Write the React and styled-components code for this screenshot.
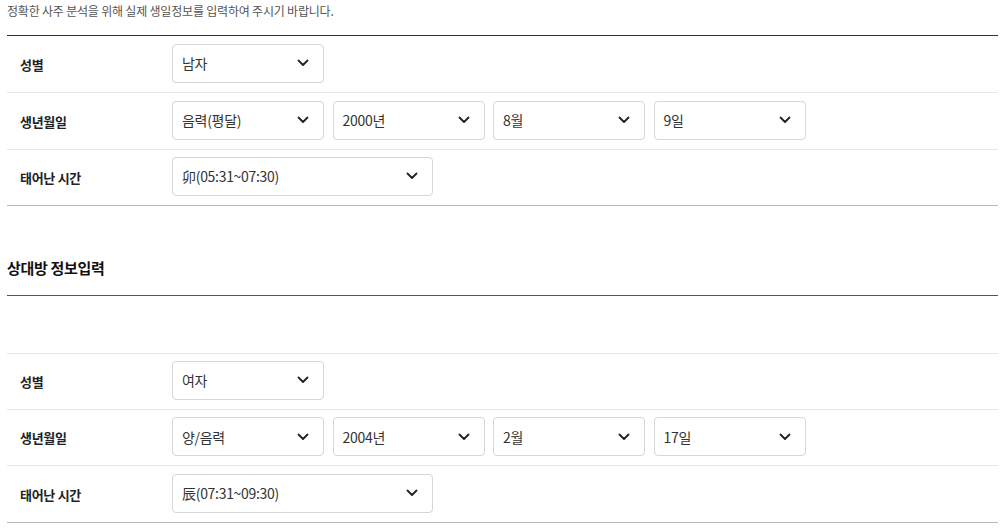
import styled, { createGlobalStyle } from "styled-components";

const GlobalStyle = createGlobalStyle`
  html, body {
    margin: 0;
    padding: 0;
    background: #fff;
  }
  body {
    font-family: "Malgun Gothic", "Noto Sans CJK KR", "Noto Sans", sans-serif;
    color: #222;
  }
`;

const Page = styled.div`
  padding: 0 7px;
  width: 991px;
`;

const Notice = styled.p`
  margin: 0;
  height: 35px;
  padding-top: 2px;
  box-sizing: border-box;
  font-size: 12px;
  line-height: 18px;
  color: #555;
  letter-spacing: -0.2px;
`;

const Table = styled.div`
  border-top: 1px solid ${(p) => p.$lineColor || "#333"};
  border-bottom: 1px solid #b8b8b8;
`;

const Row = styled.div`
  display: flex;
  align-items: center;
  height: 56.4px;
  box-sizing: border-box;
  & + & {
    border-top: 1px solid #e6e6e6;
  }
`;

const Label = styled.div`
  width: 165px;
  flex-shrink: 0;
  padding-left: 13px;
  box-sizing: border-box;
  font-size: 13px;
  font-weight: 700;
  color: #222;
  letter-spacing: -0.3px;
`;

const Fields = styled.div`
  display: flex;
  gap: 8.5px;
  margin-top: -2px;
`;

const SelectBox = styled.div`
  display: flex;
  align-items: center;
  justify-content: space-between;
  width: ${(p) => (p.$wide ? "261px" : "152px")};
  height: 39px;
  box-sizing: border-box;
  padding: 0 14px 0 9px;
  border: 1px solid #d6d6d6;
  border-radius: 4px;
  background: #fff;
  font-size: 14px;
  color: #333;
  letter-spacing: -0.3px;
`;

const Heading = styled.h3`
  margin: 0;
  height: 89px;
  display: flex;
  align-items: flex-end;
  padding-bottom: 17px;
  box-sizing: border-box;
  font-size: 15px;
  font-weight: 700;
  color: #111;
  letter-spacing: -0.3px;
`;

const Chevron = () => (
  <svg width="12" height="8" viewBox="0 0 12 8" aria-hidden="true">
    <polyline
      points="1.5,1.5 6,6 10.5,1.5"
      fill="none"
      stroke="#222"
      strokeWidth="1.8"
      strokeLinecap="round"
      strokeLinejoin="round"
    />
  </svg>
);

const Select = ({ value, wide }) => (
  <SelectBox $wide={wide}>
    <span>{value}</span>
    <Chevron />
  </SelectBox>
);

const PersonRows = ({ gender, calendar, year, month, day, time, spacer }) => (
  <>
    {spacer && <Row />}
    <Row>
      <Label>성별</Label>
      <Fields>
        <Select value={gender} />
      </Fields>
    </Row>
    <Row>
      <Label>생년월일</Label>
      <Fields>
        <Select value={calendar} />
        <Select value={year} />
        <Select value={month} />
        <Select value={day} />
      </Fields>
    </Row>
    <Row>
      <Label>태어난 시간</Label>
      <Fields>
        <Select value={time} wide />
      </Fields>
    </Row>
  </>
);

export default function App() {
  return (
    <Page>
      <GlobalStyle />
      <Notice>정확한 사주 분석을 위해 실제 생일정보를 입력하여 주시기 바랍니다.</Notice>
      <Table>
        <PersonRows
          gender="남자"
          calendar="음력(평달)"
          year="2000년"
          month="8월"
          day="9일"
          time="卯(05:31~07:30)"
        />
      </Table>
      <Heading>상대방 정보입력</Heading>
      <Table $lineColor="#555">
        <PersonRows
          spacer
          gender="여자"
          calendar="양/음력"
          year="2004년"
          month="2월"
          day="17일"
          time="辰(07:31~09:30)"
        />
      </Table>
    </Page>
  );
}
